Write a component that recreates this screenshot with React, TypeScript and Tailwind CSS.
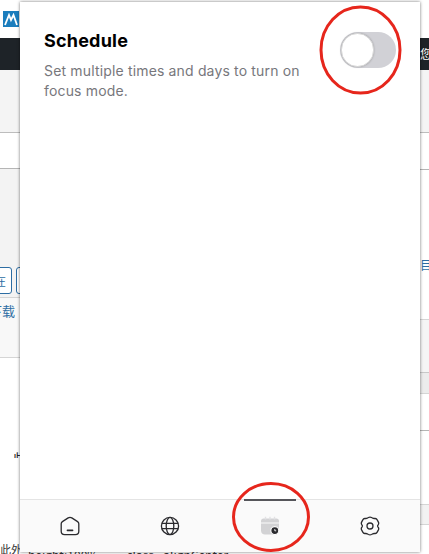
import React from "react";

const Bg = () => (
  <div className="flex w-[429px] h-[554px] overflow-hidden bg-white font-['Noto_Sans_CJK_SC',sans-serif]">
    {/* left strip of the page behind the popup */}
    <div className="w-[20px] shrink-0 flex flex-col">
      <div className="h-[38px] bg-white pt-[11px] pl-[3px]">
        <div className="w-[16px] h-[16px] bg-[#1b7dbd] flex items-center justify-center">
          <svg width="14" height="13" viewBox="0 0 14 13" fill="none">
            <path d="M1 12 L5 2 L7 7 L9.5 2 L13 12" stroke="white" strokeWidth="1.8" />
          </svg>
        </div>
      </div>
      <div className="h-[32px] bg-[#1e2328]" />
      <div className="h-[63px] bg-[#f4f4f4] border-b border-[#bdbdbd]" />
      <div className="h-[36px] bg-white border-b border-[#b5b5b5]" />
      <div className="h-[128px] bg-[#f3f3f3] flex flex-col justify-end">
        <div className="flex gap-[4px] h-[27px] -ml-[8px] mb-[3px]">
          <div className="w-[20px] shrink-0 border border-[#2d6da3] rounded-[3px] bg-white text-[#2d6da3] text-[12px] leading-[25px] text-left pl-[1px] overflow-hidden">在</div>
          <div className="w-[8px] shrink-0 border border-[#2d6da3] rounded-[3px] bg-white" />
        </div>
      </div>
      <div className="h-[61px] bg-[#f8f8f8] border-t border-b border-[#d5d5d5] text-[#2d6da3] text-[13px] leading-[26px] whitespace-nowrap overflow-hidden">
        <span className="block -ml-[11px]">下载</span>
      </div>
      <div className="h-[100px] bg-white flex items-end">
        <span className="w-[28px] shrink-0 text-[14px] leading-[16px] text-[#222] whitespace-nowrap -mb-[8px] -ml-[1px]">一些</span>
      </div>
      <div className="flex-1 bg-white flex items-end">
        <span className="text-[11px] leading-[10px] text-[#333] whitespace-nowrap">此外</span>
      </div>
    </div>
    {/* middle is covered by the popup, only the clipped bottom line shows */}
    <div className="w-[400px] shrink-0 flex flex-col justify-end overflow-hidden">
      <div className="h-[6px] text-[12px] leading-[14px] text-[#333] whitespace-nowrap pl-[8px]">
        <span>height:100%</span>
        <span className="ml-[28px]">class= alignCenter</span>
      </div>
    </div>
    {/* right strip */}
    <div className="w-[9px] shrink-0 flex flex-col">
      <div className="h-[38px] bg-white" />
      <div className="h-[32px] bg-[#1e2328] text-white text-[12px] leading-[32px] whitespace-nowrap overflow-hidden">您</div>
      <div className="h-[63px] bg-[#f4f4f4] border-b border-[#bdbdbd]" />
      <div className="h-[37px] bg-white border-b border-[#b5b5b5]" />
      <div className="h-[149px] bg-white pt-[88px]">
        <div className="text-[#2d6da3] text-[12px] leading-[14px] whitespace-nowrap overflow-hidden">目</div>
      </div>
      <div className="h-[53px] bg-[#f5f5f5] border-t border-[#d5d5d5]" />
      <div className="h-[21px] bg-[#ececec] border-t border-[#c8c8c8]" />
      <div className="h-[37px] bg-white border-t border-[#d5d5d5]" />
      <div className="h-[74px] bg-white border-t border-[#b5b5b5]" />
      <div className="h-[21px] bg-[#f2f2f2] border-t border-b border-[#d5d5d5]" />
      <div className="flex-1 bg-white" />
    </div>
  </div>
);

const HomeIcon = () => (
  <svg width="20" height="20" viewBox="0 0 20 20" fill="none" stroke="#2a2a2e" strokeWidth="1.3" strokeLinecap="round" strokeLinejoin="round">
    <path d="M8.2 1.9 L2.4 5.6 C1.6 6.1 1.2 6.9 1.2 7.8 V15.3 C1.2 17.2 2.7 18.6 4.6 18.6 H15.4 C17.3 18.6 18.8 17.2 18.8 15.3 V7.8 C18.8 6.9 18.4 6.1 17.6 5.6 L11.8 1.9 C10.7 1.2 9.3 1.2 8.2 1.9 Z" />
    <path d="M7.4 14.4 H12.6" strokeWidth="1.6" />
  </svg>
);

const GlobeIcon = () => (
  <svg width="20" height="20" viewBox="0 0 20 20" fill="none" stroke="#2a2a2e" strokeWidth="1.3">
    <circle cx="10" cy="10" r="8.6" />
    <ellipse cx="10" cy="10" rx="3.8" ry="8.6" />
    <path d="M1.6 7.4 H18.4 M1.6 12.6 H18.4" />
  </svg>
);

const CalendarClockIcon = () => (
  <svg width="20" height="20" viewBox="0 0 20 20" fill="none">
    <path d="M3.5 2.4 H16.5 C18 2.4 19 3.4 19 4.8 V6.4 H1 V4.8 C1 3.4 2 2.4 3.5 2.4 Z" fill="#d2d2d4" />
    <path d="M5.5 0.8 V3.4 M10 0.8 V3.4 M14.5 0.8 V3.4" stroke="#e2e2e4" strokeWidth="1.4" />
    <path d="M1 7.4 H19 V14 C19 17 17 18.6 14.5 18.6 H5 C2.6 18.6 1 17 1 14.5 Z" fill="#d2d2d4" />
    <circle cx="14.8" cy="14.6" r="4" fill="#2a2a2e" stroke="#fafafa" strokeWidth="1.2" />
    <path d="M14.8 13 V14.8 H16.2" stroke="#fafafa" strokeWidth="0.9" fill="none" />
  </svg>
);

const GearIcon = () => (
  <svg width="20" height="20" viewBox="0 0 20 20" fill="none" stroke="#2a2a2e" strokeWidth="1.3" strokeLinejoin="round">
    <path d="M8.4 1.5 C9.4 1 10.6 1 11.6 1.5 L12.8 2.2 C13.2 2.4 13.6 2.5 14 2.5 H15.2 C16.1 2.6 16.8 3.1 17.2 3.9 L18.4 6.1 C18.8 6.9 18.8 7.8 18.3 8.6 L17.9 9.2 C17.6 9.7 17.6 10.3 17.9 10.8 L18.3 11.4 C18.8 12.2 18.8 13.1 18.4 13.9 L17.2 16.1 C16.8 16.9 16.1 17.4 15.2 17.5 H14 C13.6 17.5 13.2 17.6 12.8 17.8 L11.6 18.5 C10.6 19 9.4 19 8.4 18.5 L7.2 17.8 C6.8 17.6 6.4 17.5 6 17.5 H4.8 C3.9 17.4 3.2 16.9 2.8 16.1 L1.6 13.9 C1.2 13.1 1.2 12.2 1.7 11.4 L2.1 10.8 C2.4 10.3 2.4 9.7 2.1 9.2 L1.7 8.6 C1.2 7.8 1.2 6.9 1.6 6.1 L2.8 3.9 C3.2 3.1 3.9 2.6 4.8 2.5 H6 C6.4 2.5 6.8 2.4 7.2 2.2 Z" />
    <circle cx="10" cy="10" r="3" />
  </svg>
);

const tabs = [
  { id: "home", icon: <HomeIcon /> },
  { id: "sites", icon: <GlobeIcon /> },
  { id: "schedule", icon: <CalendarClockIcon />, active: true },
  { id: "settings", icon: <GearIcon /> },
];

export default function App() {
  return (
    <div className="relative w-[429px] h-[554px] overflow-hidden font-['Inter',sans-serif]">
      <Bg />

      {/* popup */}
      <div className="absolute left-[20px] top-[2px] w-[400px] h-[550px] bg-white flex flex-col shadow-[0_0_3px_rgba(0,0,0,0.55)]">
        <div className="flex-1 flex justify-between pl-[24px] pr-[24px] pt-[27px]">
          <div className="w-[270px]">
            <h1 className="text-[18px] leading-[24px] font-bold text-black tracking-[0.2px]">Schedule</h1>
            <p className="mt-[8px] text-[14px] leading-[20px] tracking-[0.16px] text-[#77777c]">
              Set multiple times and days to turn on focus mode.
            </p>
          </div>
          <div className="w-[56px] h-[36px] mt-[3px] rounded-full bg-[#d1d1d6] p-[1px]">
            <div className="w-[33px] h-[34px] rounded-full bg-white border border-[#d8d8d8] shadow-[0_0_2px_rgba(0,0,0,0.25)]" />
          </div>
        </div>
        <div className="h-[53px] bg-[#fafafa] border-t border-[#e4e4e4] grid grid-cols-4">
          {tabs.map((t) => (
            <div key={t.id} className="relative flex items-center justify-center">
              {t.active && <div className="absolute -top-[1px] left-[24px] w-[52px] h-[2px] bg-[#55555a]" />}
              {t.icon}
            </div>
          ))}
        </div>
      </div>

      {/* red hand-drawn circles over the screenshot */}
      <svg className="absolute inset-0 pointer-events-none" width="429" height="554" viewBox="0 0 429 554" fill="none">
        <ellipse cx="360.5" cy="50" rx="39.5" ry="43" stroke="#e6261c" strokeWidth="3" />
        <ellipse cx="271" cy="517" rx="37.5" ry="33.5" stroke="#e6261c" strokeWidth="3" />
      </svg>
    </div>
  );
}
